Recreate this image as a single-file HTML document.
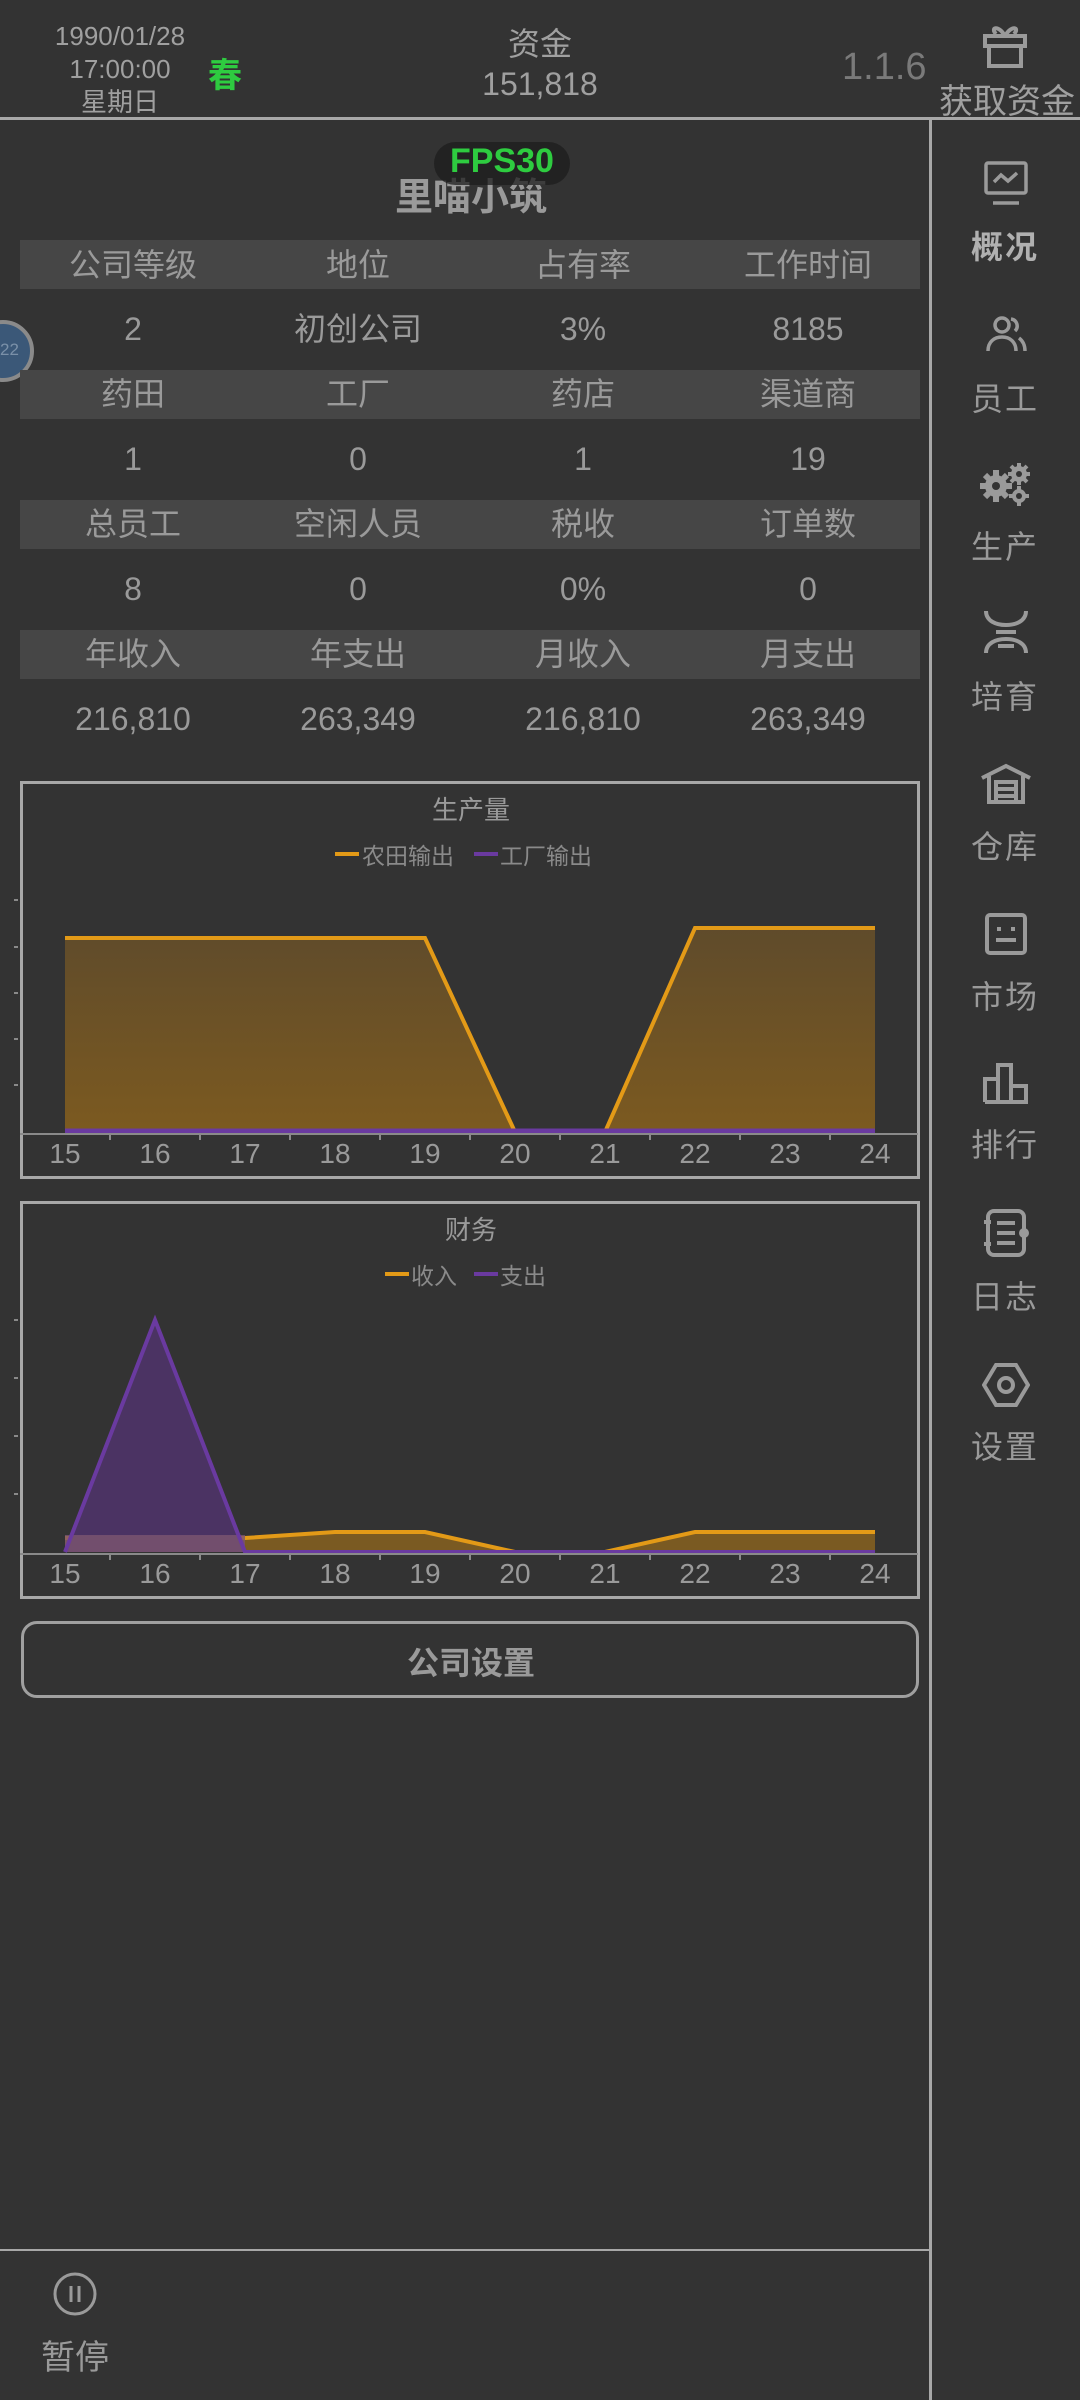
<!DOCTYPE html>
<html><head><meta charset="utf-8">
<style>
*{margin:0;padding:0;box-sizing:border-box}
body{width:1080px;height:2400px;background:#333333;position:relative;overflow:hidden;font-family:"Liberation Sans","Noto Sans CJK SC",sans-serif;color:#9a9a9a}
.a{position:absolute;white-space:nowrap}
.c{transform:translateX(-50%);text-align:center}
.hdr{position:absolute;left:20px;width:900px;height:49px;background:#464646}
.t{font-size:32px;line-height:40px}
.side{font-size:32px;color:#9a9a9a;letter-spacing:2px}
</style></head><body>
<!-- header -->
<div class="a c" style="left:120px;top:20px;font-size:26px;line-height:33px;color:#a0a0a0">1990/01/28<br>17:00:00<br>星期日</div>
<div class="a c" style="left:225px;top:48px;font-size:34px;color:#2ecc40;font-weight:bold">春</div>
<div class="a c" style="left:540px;top:24px;font-size:32px;line-height:40px;color:#a0a0a0">资金<br>151,818</div>
<div class="a" style="left:842px;top:46px;font-size:38px;color:#7a7a7a">1.1.6</div>
<svg class="a" style="left:980px;top:20px" width="50" height="50" viewBox="0 0 50 50" fill="none" stroke="#9a9a9a" stroke-width="4"><rect x="5" y="16" width="40" height="10"/><rect x="9" y="26" width="32" height="20"/><path d="M25 16 C18 4 10 8 16 14 M25 16 C32 4 40 8 34 14"/></svg>
<div class="a c" style="left:1007px;top:74px;font-size:34px;color:#a0a0a0">获取资金</div>
<div class="a" style="left:0;top:117px;width:1080px;height:3px;background:#a8a8a8"></div>
<div class="a" style="left:929px;top:118px;width:3px;height:2282px;background:#a8a8a8"></div>
<div class="a" style="left:0;top:2249px;width:930px;height:2px;background:#a8a8a8"></div>
<!-- pause -->
<svg class="a" style="left:52px;top:2271px" width="46" height="46" viewBox="0 0 46 46" fill="none" stroke="#9a9a9a" stroke-width="3"><circle cx="23" cy="23" r="20"/><path d="M19 15v16M27 15v16"/></svg>
<div class="a c" style="left:75px;top:2330px;font-size:34px">暂停</div>
<!-- title -->
<div class="a c" style="left:471px;top:166px;font-size:38px;font-weight:bold;color:#9a9a9a">里喵小筑</div>
<div class="a" style="left:434px;top:142px;width:136px;height:43px;border-radius:22px;background:rgba(30,30,30,0.75)"></div>
<div class="a c" style="left:502px;top:142px;font-size:34px;font-weight:bold;color:#2ecc40">FPS30</div>
<!-- blue circle -->
<div class="a" style="left:-28px;top:320px;width:62px;height:62px;border-radius:50%;background:#3b5878;border:4px solid #8a8a8a"></div>
<div class="a" style="left:0;top:340px;font-size:17px;color:#7a90a8">22</div>
<!-- table -->
<div class="hdr" style="top:240px"></div>
<div class="hdr" style="top:370px"></div>
<div class="hdr" style="top:500px"></div>
<div class="hdr" style="top:630px"></div>
<div class="a c t" style="left:133px;top:245px">公司等级</div><div class="a c t" style="left:358px;top:245px">地位</div><div class="a c t" style="left:583px;top:245px">占有率</div><div class="a c t" style="left:808px;top:245px">工作时间</div>
<div class="a c t" style="left:133px;top:309px">2</div><div class="a c t" style="left:358px;top:309px">初创公司</div><div class="a c t" style="left:583px;top:309px">3%</div><div class="a c t" style="left:808px;top:309px">8185</div>
<div class="a c t" style="left:133px;top:374px">药田</div><div class="a c t" style="left:358px;top:374px">工厂</div><div class="a c t" style="left:583px;top:374px">药店</div><div class="a c t" style="left:808px;top:374px">渠道商</div>
<div class="a c t" style="left:133px;top:439px">1</div><div class="a c t" style="left:358px;top:439px">0</div><div class="a c t" style="left:583px;top:439px">1</div><div class="a c t" style="left:808px;top:439px">19</div>
<div class="a c t" style="left:133px;top:504px">总员工</div><div class="a c t" style="left:358px;top:504px">空闲人员</div><div class="a c t" style="left:583px;top:504px">税收</div><div class="a c t" style="left:808px;top:504px">订单数</div>
<div class="a c t" style="left:133px;top:569px">8</div><div class="a c t" style="left:358px;top:569px">0</div><div class="a c t" style="left:583px;top:569px">0%</div><div class="a c t" style="left:808px;top:569px">0</div>
<div class="a c t" style="left:133px;top:634px">年收入</div><div class="a c t" style="left:358px;top:634px">年支出</div><div class="a c t" style="left:583px;top:634px">月收入</div><div class="a c t" style="left:808px;top:634px">月支出</div>
<div class="a c t" style="left:133px;top:699px">216,810</div><div class="a c t" style="left:358px;top:699px">263,349</div><div class="a c t" style="left:583px;top:699px">216,810</div><div class="a c t" style="left:808px;top:699px">263,349</div>
<!-- chart 1 -->
<svg class="a" style="left:0;top:770px" width="930" height="420" viewBox="0 770 930 420" font-family="Liberation Sans, Noto Sans CJK SC, sans-serif">
<defs><linearGradient id="g1" x1="0" y1="0" x2="0" y2="1"><stop offset="0" stop-color="#5f4b2b"/><stop offset="1" stop-color="#7c5a20"/></linearGradient></defs>
<rect x="21.5" y="782.5" width="897" height="395" fill="none" stroke="#a8a8a8" stroke-width="3"/>
<text x="471" y="819" font-size="26" fill="#9a9a9a" text-anchor="middle">生产量</text>
<rect x="335" y="852" width="24" height="4" fill="#e39a17"/><text x="362" y="864" font-size="23" fill="#8a8a8a">农田输出</text>
<rect x="474" y="852" width="24" height="4" fill="#6a3aa0"/><text x="500" y="864" font-size="23" fill="#8a8a8a">工厂输出</text>
<polygon points="65,938 425,938 515,1132 605,1132 695,928 875,928 875,1132 65,1132" fill="url(#g1)"/>
<polyline points="65,938 425,938 515,1132 605,1132 695,928 875,928" fill="none" stroke="#e39a17" stroke-width="4"/>
<line x1="65" y1="1131" x2="875" y2="1131" stroke="#6a3aa0" stroke-width="5"/>
<line x1="20" y1="1134" x2="918" y2="1134" stroke="#8a8a8a" stroke-width="2"/>
<g stroke="#8a8a8a" stroke-width="2"><line x1="14" y1="900" x2="18" y2="900"/><line x1="14" y1="947" x2="18" y2="947"/><line x1="14" y1="993" x2="18" y2="993"/><line x1="14" y1="1039" x2="18" y2="1039"/><line x1="14" y1="1085" x2="18" y2="1085"/>
<path d="M110 1134v6M200 1134v6M290 1134v6M380 1134v6M470 1134v6M560 1134v6M650 1134v6M740 1134v6M830 1134v6"/></g>
<g font-size="28" fill="#9a9a9a" text-anchor="middle"><text x="65" y="1163">15</text><text x="155" y="1163">16</text><text x="245" y="1163">17</text><text x="335" y="1163">18</text><text x="425" y="1163">19</text><text x="515" y="1163">20</text><text x="605" y="1163">21</text><text x="695" y="1163">22</text><text x="785" y="1163">23</text><text x="875" y="1163">24</text></g>
</svg>
<!-- chart 2 -->
<svg class="a" style="left:0;top:1190px" width="930" height="420" viewBox="0 1190 930 420" font-family="Liberation Sans, Noto Sans CJK SC, sans-serif">
<rect x="21.5" y="1202.5" width="897" height="395" fill="none" stroke="#a8a8a8" stroke-width="3"/>
<text x="471" y="1239" font-size="26" fill="#9a9a9a" text-anchor="middle">财务</text>
<rect x="385" y="1272" width="24" height="4" fill="#e39a17"/><text x="411" y="1284" font-size="23" fill="#8a8a8a">收入</text>
<rect x="474" y="1272" width="24" height="4" fill="#6a3aa0"/><text x="500" y="1284" font-size="23" fill="#8a8a8a">支出</text>
<polygon points="65,1538 245,1538 335,1532 425,1532 515,1552 605,1552 695,1532 875,1532 875,1552 65,1552" fill="#7a5a22"/>
<polyline points="65,1538 245,1538 335,1532 425,1532 515,1552 605,1552 695,1532 875,1532" fill="none" stroke="#e39a17" stroke-width="4"/>
<polygon points="65,1552 155,1320 245,1552" fill="#4d3466" opacity="0.95"/>
<rect x="65" y="1535" width="180" height="17" fill="#7a5570" opacity="0.8"/>
<polyline points="65,1552 155,1320 245,1552 875,1552" fill="none" stroke="#6a3aa0" stroke-width="4"/>
<line x1="20" y1="1554" x2="918" y2="1554" stroke="#8a8a8a" stroke-width="2"/>
<g stroke="#8a8a8a" stroke-width="2"><line x1="14" y1="1320" x2="18" y2="1320"/><line x1="14" y1="1378" x2="18" y2="1378"/><line x1="14" y1="1436" x2="18" y2="1436"/><line x1="14" y1="1494" x2="18" y2="1494"/>
<path d="M110 1554v6M200 1554v6M290 1554v6M380 1554v6M470 1554v6M560 1554v6M650 1554v6M740 1554v6M830 1554v6"/></g>
<g font-size="28" fill="#9a9a9a" text-anchor="middle"><text x="65" y="1583">15</text><text x="155" y="1583">16</text><text x="245" y="1583">17</text><text x="335" y="1583">18</text><text x="425" y="1583">19</text><text x="515" y="1583">20</text><text x="605" y="1583">21</text><text x="695" y="1583">22</text><text x="785" y="1583">23</text><text x="875" y="1583">24</text></g>
</svg>
<!-- button -->
<div class="a" style="left:21px;top:1621px;width:898px;height:77px;border:3px solid #a0a0a0;border-radius:16px"></div>
<div class="a c" style="left:471px;top:1638px;font-size:32px;font-weight:bold;color:#9a9a9a">公司设置</div>
<!-- sidebar -->
<svg class="a" style="left:983px;top:160px" width="46" height="48" viewBox="0 0 46 48" fill="none" stroke="#9a9a9a" stroke-width="3.5"><rect x="3" y="3" width="40" height="30" rx="2"/><path d="M11 22l7-7 7 6 9-8M10 43h26"/></svg>
<div class="a c side" style="left:1005px;top:222px;font-weight:bold;color:#b0b0b0">概况</div>
<svg class="a" style="left:983px;top:314px" width="46" height="40" viewBox="0 0 46 40" fill="none" stroke="#9a9a9a" stroke-width="3.5"><circle cx="19" cy="11" r="7"/><path d="M5 37c0-9 6-14 14-14s14 5 14 14M28 5a7 7 0 0 1 4 12M36 24c4 3 6 7 6 13"/></svg>
<div class="a c side" style="left:1005px;top:374px">员工</div>
<svg class="a" style="left:980px;top:462px" width="52" height="46" viewBox="0 0 52 46" fill="#9a9a9a"><circle cx="16" cy="24" r="11"/><g stroke="#9a9a9a" stroke-width="6"><path d="M16 8v32M0 24h32M5 13l22 22M27 13L5 35"/></g><circle cx="16" cy="24" r="4" fill="#333"/><circle cx="39" cy="12" r="8"/><g stroke="#9a9a9a" stroke-width="4"><path d="M39 1v22M28 12h22M31 4l16 16M47 4L31 20"/></g><circle cx="39" cy="12" r="3" fill="#333"/><circle cx="39" cy="34" r="7"/><g stroke="#9a9a9a" stroke-width="4"><path d="M39 24v20M29 34h20"/></g><circle cx="39" cy="34" r="3" fill="#333"/></svg>
<div class="a c side" style="left:1005px;top:522px">生产</div>
<svg class="a" style="left:980px;top:608px" width="52" height="48" viewBox="0 0 52 48" fill="none" stroke="#9a9a9a" stroke-width="4"><path d="M6 3c0 10 10 14 20 14s20-4 20-14M6 45c0-10 10-14 20-14s20 4 20 14M16 24h20M18 38h16"/></svg>
<div class="a c side" style="left:1005px;top:672px">培育</div>
<svg class="a" style="left:980px;top:762px" width="52" height="42" viewBox="0 0 52 42" fill="none" stroke="#9a9a9a" stroke-width="4"><path d="M2 16L26 4l24 12M9 14v26h34V14M16 20h20v20H16zM16 27h20M16 34h20"/></svg>
<div class="a c side" style="left:1005px;top:822px">仓库</div>
<svg class="a" style="left:984px;top:912px" width="44" height="44" viewBox="0 0 44 44" fill="none" stroke="#9a9a9a" stroke-width="4"><rect x="3" y="3" width="38" height="38" rx="3"/><path d="M15 15v4M29 15v4M12 28h20"/></svg>
<div class="a c side" style="left:1005px;top:972px">市场</div>
<svg class="a" style="left:982px;top:1062px" width="48" height="42" viewBox="0 0 48 42" fill="none" stroke="#9a9a9a" stroke-width="4"><path d="M3 40V17h13v23M16 40V3h13v37M29 40V24h15v16H3"/></svg>
<div class="a c side" style="left:1005px;top:1120px">排行</div>
<svg class="a" style="left:982px;top:1208px" width="48" height="50" viewBox="0 0 48 50" fill="none" stroke="#9a9a9a" stroke-width="4"><rect x="6" y="3" width="36" height="44" rx="6"/><path d="M15 15h18M15 25h18M15 35h18M2 14h7M2 36h7"/><circle cx="42" cy="25" r="3"/></svg>
<div class="a c side" style="left:1005px;top:1272px">日志</div>
<svg class="a" style="left:982px;top:1362px" width="48" height="46" viewBox="0 0 48 46" fill="none" stroke="#9a9a9a" stroke-width="4"><path d="M14 3h20l12 20-12 20H14L2 23z"/><circle cx="24" cy="23" r="7"/></svg>
<div class="a c side" style="left:1005px;top:1422px">设置</div>
</body></html>
